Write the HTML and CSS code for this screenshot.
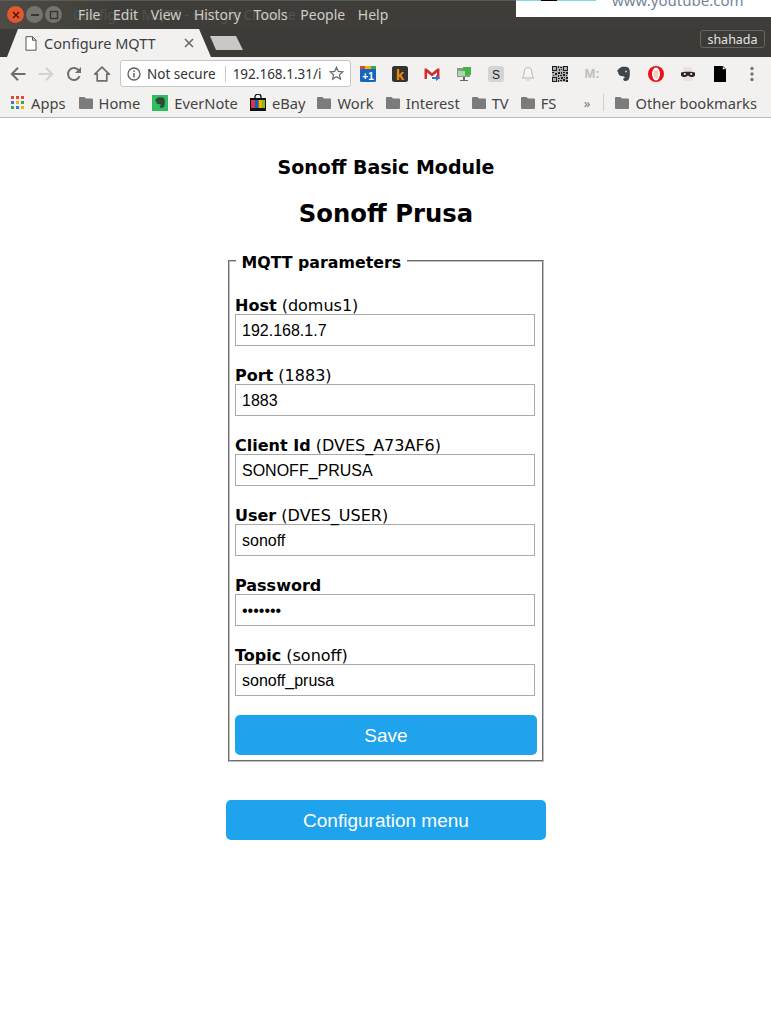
FILE: index.html
```html
<!DOCTYPE html>
<html lang="en">
<head>
  <meta charset="UTF-8">
  <meta name="viewport" content="width=device-width, initial-scale=1.0">
  <title>Configure MQTT</title>
  <link rel="stylesheet" href="styles.css">
</head>
<body>
  <header class="browser">
    <div class="titlebar">
      <div class="win-btns">
        <span class="win-btn close"><svg width="8" height="8" viewBox="0 0 8 8"><path d="M1 1l6 6M7 1l-6 6" stroke="#4a1a08" stroke-width="1.5"/></svg></span>
        <span class="win-btn"><svg width="10" height="8" viewBox="0 0 10 8"><path d="M1 4h8" stroke="#37362f" stroke-width="2"/></svg></span>
        <span class="win-btn"><svg width="10" height="10" viewBox="0 0 10 10"><rect x="1.5" y="1.5" width="7" height="7" fill="none" stroke="#37362f" stroke-width="1.4"/></svg></span>
      </div>
      <div class="title-ghost">Configure MQTT - Google Chrome</div>
      <nav class="menu">
        <span>File</span><span>Edit</span><span>View</span><span>History</span><span>Tools</span><span>People</span><span>Help</span>
      </nav>
      <div class="yt-popup">
        <div class="yt-thumb"></div>
        <div class="yt-url">www.youtube.com</div>
      </div>
    </div>

    <div class="tabstrip">
      <div class="tab">
        <svg class="tab-icon" width="12" height="15" viewBox="0 0 12 15"><path d="M1 .7h6.500L11 4.200v10H1zM7.500 .7v3.500H11" fill="#fff" stroke="#555" stroke-width="1"/></svg>
        <span class="tab-title">Configure MQTT</span>
        <svg class="tab-x" width="10" height="10" viewBox="0 0 10 10"><path d="M1 1l8 8M9 1l-8 8" stroke="#666" stroke-width="1.5"/></svg>
      </div>
      <div class="newtab"></div>
      <div class="profile">shahada</div>
    </div>

    <div class="toolbar">
      <div class="nav-btns">
        <svg width="16" height="16" viewBox="0 0 16 16"><path d="M15.500 8H2M8 1.800L1.800 8 8 14.200" fill="none" stroke="#6e6e6e" stroke-width="2"/></svg>
        <svg width="16" height="16" viewBox="0 0 16 16"><path d="M.5 8H14M8 1.800L14.200 8 8 14.200" fill="none" stroke="#d2d2d2" stroke-width="2"/></svg>
        <svg width="16" height="16" viewBox="0 0 16 16"><path d="M13.600 10.200A6 6 0 1 1 13 4.600" fill="none" stroke="#6e6e6e" stroke-width="2"/><path d="M15 1v6H9z" fill="#6e6e6e"/></svg>
        <svg width="16" height="16" viewBox="0 0 16 16"><path d="M8 1.200L.8 8.200h2.400v6.600h9.600V8.200h2.400z" fill="none" stroke="#6e6e6e" stroke-width="1.7"/></svg>
      </div>
      <div class="omnibox">
        <svg class="info" width="14" height="14" viewBox="0 0 14 14"><circle cx="7" cy="7" r="6" fill="none" stroke="#5f5f5f" stroke-width="1.3"/><path d="M7 6v4.400M7 3.400v1.500" stroke="#5f5f5f" stroke-width="1.5"/></svg>
        <span class="not-secure">Not secure</span>
        <span class="omni-sep"></span>
        <span class="url">192.168.1.31/i</span>
        <svg class="star" width="15" height="15" viewBox="0 0 15 15"><path d="M7.500 1.400l1.800 4.100 4.400.4-3.300 2.900 1 4.300-3.900-2.300-3.900 2.300 1-4.300L1.300 5.900l4.400-.4z" fill="none" stroke="#6e6e6e" stroke-width="1.3"/></svg>
      </div>
      <div class="extensions">
        <span class="ext"><svg width="16" height="16" viewBox="0 0 16 16"><rect width="16" height="16" rx="1.5" fill="#1565c0"/><rect width="5" height="3" fill="#d9453a"/><rect x="5" width="6" height="3" fill="#f0b400"/><rect x="11" width="5" height="3" fill="#3aa655"/><text x="8" y="13.5" class="ext-plus">+1</text></svg></span>
        <span class="ext"><svg width="16" height="16" viewBox="0 0 16 16"><rect width="16" height="16" rx="2.5" fill="#333"/><text x="8" y="13.5" class="ext-k">k</text></svg></span>
        <span class="ext"><svg width="16" height="16" viewBox="0 0 16 16"><path d="M.5 2.500h15v11H.5z" fill="#fff"/><path d="M.5 2.500h2.200L8 7l5.300-4.500h2.200v10.500h-2.500V6.500L8 10.500 3 6.500V13H.5z" fill="#d92b2b"/><path d="M8 11h4V9l4 3-4 3v-2H8z" fill="#3a6fc4"/></svg></span>
        <span class="ext"><svg width="16" height="16" viewBox="0 0 16 16"><rect x="1" y="2" width="13" height="9" fill="#8a9a8a"/><path d="M7 1h8v8H7z" fill="#46b34a"/><path d="M2 5h7v5H2z" fill="#a6dca0"/><path d="M7 11h2v3h3v1H4v-1h3z" fill="#6a6a6a"/></svg></span>
        <span class="ext"><svg width="16" height="16" viewBox="0 0 16 16"><rect width="16" height="16" rx="3" fill="#d4d4d4"/><text x="8" y="12.5" class="ext-s">S</text></svg></span>
        <span class="ext"><svg width="16" height="16" viewBox="0 0 16 16"><path d="M8 1.500c-2.500 0-3.800 1.800-3.800 4.500 0 3-.9 4.500-1.800 6h11.200c-.9-1.500-1.800-3-1.800-6 0-2.700-1.300-4.500-3.800-4.500z" fill="#f6f6f4" stroke="#b4b4b4"/><path d="M6.500 13.500h3v1h-3z" fill="#b4b4b4"/></svg></span>
        <span class="ext"><svg width="16" height="16" viewBox="0 0 16 16"><rect width="16" height="16" fill="#b0b0b0"/><path d="M0 0h5v5H0zM11 0h5v5h-5zM0 11h5v5H0zM1 1v3h3V1zM12 1v3h3V1zM1 12v3h3v-3zM6 0h1v2H6zM8 1h2v1H8zM7 3h1v2H7zM9 3h1v1H9zM0 6h2v1H0zM3 7h2v2H3zM6 6h2v2H6zM9 6h1v2H9zM11 6h2v1h-2zM14 6h2v2h-2zM1 9h1v1H1zM6 9h1v2H6zM8 9h2v1H8zM11 8h2v2h-2zM14 9h1v1h-1zM6 12h2v1H6zM9 11h2v2H9zM12 11h1v1h-1zM14 11h2v2h-2zM6 14h1v2H6zM8 14h2v1H8zM11 13h2v2h-2zM14 14h2v2h-2z" fill="#1e1e1e" fill-rule="evenodd"/></svg></span>
        <span class="ext"><span class="ext-m">M:</span></span>
        <span class="ext"><svg width="16" height="16" viewBox="0 0 16 16"><path d="M3 2.500L6 .8h3.500c2.500 0 4 1.200 4.200 4 .2 2.500.3 5.500-.7 8-.6 1.500-2.200 2.400-4 2.200-1.200-.2-1.700-1-1.700-1.900 0-1 .9-1.500 2-1.300-.4-1.100-1.700-1.600-2.800-1.600C3.800 10.200 2 8.500 2 5.500H.8z" fill="#3d474b"/><circle cx="10" cy="5.500" r="1" fill="#c9cdcf"/></svg></span>
        <span class="ext"><svg width="18" height="18" viewBox="0 0 18 18"><circle cx="9" cy="9" r="8" fill="#e8121c"/><ellipse cx="9" cy="9" rx="4" ry="6.5" fill="#fff"/><path d="M6.500 9.500V5.500h5v6.500l-2 2-3-2z" fill="#f2cfc8"/></svg></span>
        <span class="ext"><svg width="16" height="16" viewBox="0 0 16 16"><path d="M3 1h7l3 3v11H3z" fill="#e4e4e4"/><path d="M1 6.500c2-1 12-1 14 0v3c-1 1.500-3.500 2-5 1.300L8 9.500l-2 1.300c-1.500.7-4 .2-5-1.300z" fill="#3a2323"/><circle cx="4.800" cy="8" r="1.100" fill="#eee"/><circle cx="11.200" cy="8" r="1.100" fill="#eee"/></svg></span>
        <span class="ext"><svg width="16" height="18" viewBox="0 0 16 18"><path d="M2 1h8.500L14 4.500V17H2z" fill="#000"/><path d="M10.500 1L14 4.500h-3.500z" fill="#fff" stroke="#000" stroke-width=".6"/></svg></span>
        <span class="ext"><svg width="4" height="16" viewBox="0 0 4 16"><circle cx="2" cy="2.500" r="1.700" fill="#777"/><circle cx="2" cy="8" r="1.700" fill="#777"/><circle cx="2" cy="13.500" r="1.700" fill="#777"/></svg></span>
      </div>
    </div>

    <div class="bookmarks">
      <div class="bm bm-apps">
        <svg width="13" height="13" viewBox="0 0 13 13">
          <rect width="3" height="3" fill="#e8453c"/><rect x="5" width="3" height="3" fill="#e8453c"/><rect x="10" width="3" height="3" fill="#e8453c"/>
          <rect y="5" width="3" height="3" fill="#3c78d8"/><rect x="5" y="5" width="3" height="3" fill="#f4b400"/><rect x="10" y="5" width="3" height="3" fill="#34a853"/>
          <rect y="10" width="3" height="3" fill="#34a853"/><rect x="5" y="10" width="3" height="3" fill="#3c78d8"/><rect x="10" y="10" width="3" height="3" fill="#f4b400"/>
        </svg>
        <span>Apps</span>
      </div>
      <div class="bm"><svg class="folder" width="14" height="12" viewBox="0 0 14 12"><path d="M1 0h4.500l1.500 1.500h6a1 1 0 0 1 1 1V11a1 1 0 0 1-1 1H1a1 1 0 0 1-1-1V1a1 1 0 0 1 1-1z"/></svg><span>Home</span></div>
      <div class="bm"><svg width="16" height="16" viewBox="0 0 16 16"><rect width="16" height="16" fill="#2dbe60"/><path d="M4 4l2.500-1.800h3c2 0 3 1 3.200 3 .2 2 .2 4-.5 6-.4 1.200-1.700 1.900-3 1.700-1-.2-1.300-.8-1.300-1.400 0-.8.700-1.200 1.500-1-.3-.9-1.300-1.200-2.100-1.200C5.300 9.300 4 8 4 5.800H3z" fill="#2e4a36"/></svg><span>EverNote</span></div>
      <div class="bm"><svg width="16" height="17" viewBox="0 0 16 17"><path d="M5 5V3a3 3 0 0 1 6 0v2" fill="none" stroke="#111" stroke-width="1.3"/><rect y="4" width="16" height="13" fill="#111"/><rect x="1" y="6" width="4" height="8" fill="#e53238"/><rect x="5" y="6" width="3.5" height="8" fill="#0064d2"/><rect x="8.500" y="6" width="3.5" height="8" fill="#f5af02"/><rect x="12" y="6" width="3" height="8" fill="#86b817"/></svg><span>eBay</span></div>
      <div class="bm"><svg class="folder" width="14" height="12" viewBox="0 0 14 12"><path d="M1 0h4.500l1.500 1.500h6a1 1 0 0 1 1 1V11a1 1 0 0 1-1 1H1a1 1 0 0 1-1-1V1a1 1 0 0 1 1-1z"/></svg><span>Work</span></div>
      <div class="bm"><svg class="folder" width="14" height="12" viewBox="0 0 14 12"><path d="M1 0h4.500l1.500 1.500h6a1 1 0 0 1 1 1V11a1 1 0 0 1-1 1H1a1 1 0 0 1-1-1V1a1 1 0 0 1 1-1z"/></svg><span>Interest</span></div>
      <div class="bm"><svg class="folder" width="14" height="12" viewBox="0 0 14 12"><path d="M1 0h4.500l1.500 1.500h6a1 1 0 0 1 1 1V11a1 1 0 0 1-1 1H1a1 1 0 0 1-1-1V1a1 1 0 0 1 1-1z"/></svg><span>TV</span></div>
      <div class="bm"><svg class="folder" width="14" height="12" viewBox="0 0 14 12"><path d="M1 0h4.500l1.500 1.500h6a1 1 0 0 1 1 1V11a1 1 0 0 1-1 1H1a1 1 0 0 1-1-1V1a1 1 0 0 1 1-1z"/></svg><span>FS</span></div>
      <div class="bm-end">
        <span class="bm-more">»</span>
        <span class="bm-sep"></span>
        <div class="bm"><svg class="folder" width="14" height="12" viewBox="0 0 14 12"><path d="M1 0h4.500l1.500 1.500h6a1 1 0 0 1 1 1V11a1 1 0 0 1-1 1H1a1 1 0 0 1-1-1V1a1 1 0 0 1 1-1z"/></svg><span>Other bookmarks</span></div>
      </div>
    </div>
  </header>

  <main class="page">
    <div class="content">
      <div class="heading">
        <h3>Sonoff Basic Module</h3>
        <h2>Sonoff Prusa</h2>
      </div>
      <fieldset>
        <legend>&nbsp;MQTT parameters&nbsp;</legend>
        <form>
          <div class="field"><b>Host</b> (domus1)<input type="text" value="192.168.1.7"></div>
          <div class="field"><b>Port</b> (1883)<input type="text" value="1883"></div>
          <div class="field"><b>Client Id</b> (DVES_A73AF6)<input type="text" value="SONOFF_PRUSA"></div>
          <div class="field"><b>User</b> (DVES_USER)<input type="text" value="sonoff"></div>
          <div class="field"><b>Password</b><input type="password" value="1234567"></div>
          <div class="field"><b>Topic</b> (sonoff)<input type="text" value="sonoff_prusa"></div>
          <button type="button" class="btn btn-save">Save</button>
        </form>
      </fieldset>
      <button type="button" class="btn btn-menu">Configuration menu</button>
    </div>
  </main>
</body>
</html>
```

FILE: styles.css
```css
body {
  margin: 0;
  background: white;
  font-family: "DejaVu Sans", Verdana, sans-serif;
  font-size: 16px;
  color: black;
}

/* browser chrome */
.browser {
  font-family: "Noto Sans", sans-serif;
  font-size: 14.7px;
}
.titlebar {
  position: relative;
  height: 29px;
  display: flex;
  align-items: center;
  background: linear-gradient(to right, #4c4b45, #3e3d39 120px);
  border-top: 1px solid #5c5b55;
  box-sizing: border-box;
}
.win-btns {
  display: flex;
  gap: 2px;
  margin: 0 0 1px 7px;
}
.win-btn {
  width: 17px;
  height: 17px;
  border-radius: 50%;
  background: #74736d;
  display: flex;
  align-items: center;
  justify-content: center;
}
.win-btn.close {
  background: #e2572b;
}
.title-ghost {
  position: absolute;
  top: 4px;
  left: 73px;
  color: #53524c;
  font-size: 14px;
}
.menu {
  position: relative;
  display: flex;
  gap: 12.6px;
  margin: 0 0 2px 16px;
  color: #cfcdc6;
  font-size: 14px;
}
.yt-popup {
  position: absolute;
  top: -1px;
  right: 0;
  width: 255px;
  height: 17px;
  background: white;
  overflow: hidden;
}
.yt-thumb {
  width: 80px;
  height: 1px;
  background: linear-gradient(to right, #7fd6e4 25px, black 25px, black 41px, #7fd6e4 41px);
}
.yt-url {
  margin: -11px 0 0 96px;
  color: #71849a;
  font-size: 15px;
}
.tabstrip {
  height: 28px;
  display: flex;
  align-items: flex-end;
  background: #3c3b37;
}
.tab {
  width: 212px;
  height: 28px;
  display: flex;
  align-items: center;
  background: #f2f1f0;
  clip-path: polygon(7px 100%, 18px 0, 199px 0, 211px 100%);
  color: #3c4043;
  font-size: 14.5px;
}
.tab-icon {
  margin-left: 25px;
}
.tab-title {
  margin-left: 7px;
}
.tab-x {
  margin-left: auto;
  margin-right: 18px;
}
.newtab {
  width: 33px;
  height: 14px;
  margin: 0 0 7px -2px;
  background: #c9c8c4;
  clip-path: polygon(0 0, 26px 0, 33px 100%, 6px 100%);
}
.profile {
  margin: 0 6px 9px auto;
  width: 65px;
  height: 18px;
  line-height: 17px;
  box-sizing: border-box;
  border: 1px solid #65645e;
  border-radius: 3px;
  color: #e6e5e0;
  font-size: 12.5px;
  text-align: center;
}
.toolbar {
  height: 33px;
  display: flex;
  align-items: center;
  background: #f2f1f0;
}
.nav-btns {
  display: flex;
  gap: 12px;
  margin-left: 10px;
  width: 100px;
}
.omnibox {
  width: 231px;
  height: 27px;
  margin-left: 10px;
  display: flex;
  align-items: center;
  box-sizing: border-box;
  background: white;
  border: 1px solid #c6c6c6;
  border-radius: 3px;
  color: #333;
  font-size: 13.5px;
}
.info {
  margin-left: 6px;
}
.not-secure {
  margin-left: 6px;
}
.omni-sep {
  width: 1px;
  height: 16px;
  margin-left: 9px;
  background: #c8c8c8;
}
.url {
  width: 88px;
  margin-left: 7px;
  overflow: hidden;
  white-space: nowrap;
}
.star {
  margin-left: auto;
  margin-right: 6px;
}
.extensions {
  display: flex;
  margin-left: 1px;
}
.ext {
  width: 32px;
  height: 20px;
  display: flex;
  align-items: center;
  justify-content: center;
}
.ext-plus {
  fill: white;
  font: bold 10px "Liberation Sans", sans-serif;
  text-anchor: middle;
}
.ext-k {
  fill: #f08a00;
  font: bold 15px "Liberation Sans", sans-serif;
  text-anchor: middle;
}
.ext-s {
  fill: #222;
  font: 12px "Liberation Sans", sans-serif;
  text-anchor: middle;
}
.ext-m {
  color: #bdbdbd;
  font: bold 13px "Liberation Sans", sans-serif;
}
.bookmarks {
  height: 28px;
  box-sizing: border-box;
  display: flex;
  align-items: center;
  gap: 12px;
  padding: 0 0 2px 11px;
  background: #f2f1f0;
  border-bottom: 1px solid #bcbcbc;
  color: #444;
}
.bm {
  display: flex;
  align-items: center;
  gap: 6px;
  white-space: nowrap;
}
.bm-apps {
  gap: 7px;
  margin-right: 1px;
}
.folder {
  fill: #7b7b7b;
}
.bm-end {
  display: flex;
  align-items: center;
  margin-left: auto;
  padding-right: 14px;
}
.bm-more {
  color: #777;
  font-size: 13px;
}
.bm-sep {
  width: 1px;
  height: 17px;
  margin: 0 11px 0 13px;
  background: #cfcfcf;
}

/* page */
.page {
  display: flex;
  justify-content: center;
}
.content {
  width: 320px;
  margin-left: 1px;
}
.heading {
  text-align: center;
  padding-top: 37px;
}
h3 {
  margin: 0;
  font-size: 19px;
  line-height: 24px;
}
h2 {
  margin: 21px 0 0;
  font-size: 24.3px;
  line-height: 28px;
}
fieldset {
  margin: 21px 2px 0;
  padding: 0 5px 5px;
  border: 2px groove #c0c0c0;
}
legend {
  padding: 4px 0 0;
  margin-left: 1px;
  font-size: 15.8px;
  font-weight: bold;
}
form {
  padding-top: 24px;
}
.field {
  height: 54px;
  margin-bottom: 16px;
  line-height: 20px;
}
.field input {
  display: block;
  width: 300px;
  height: 32px;
  margin-top: -2px;
  box-sizing: border-box;
  padding: 2px 6px 1px;
  border: 1px solid #a9a9a9;
  border-radius: 0;
  font-family: "Liberation Sans", Arial, sans-serif;
  font-size: 16px;
  color: black;
}
.btn {
  display: block;
  width: 100%;
  height: 40px;
  border: 0;
  border-radius: 5px;
  background-color: #1fa3ec;
  color: white;
  font-family: "Liberation Sans", Arial, sans-serif;
  font-size: 19px;
  line-height: 40px;
}
.btn-save {
  margin-top: -1px;
}
.btn-menu {
  margin-top: 38px;
}
```
